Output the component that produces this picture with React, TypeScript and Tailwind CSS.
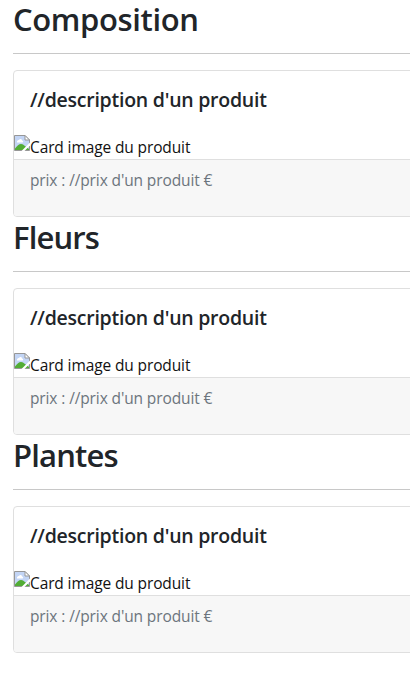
const sections = [
  { title: "Composition", tracking: "tracking-[-0.36px]" },
  { title: "Fleurs", tracking: "tracking-[-0.85px]" },
  { title: "Plantes", tracking: "tracking-[-0.85px]" },
];

function BrokenImage() {
  return (
    <svg width="16" height="16" viewBox="0 0 16 16" className="shrink-0">
      <path d="M0.5 0.5H11L15.5 5V15.5H0.5Z" fill="#c3d5f5" />
      <path d="M3 7.5C2.5 5.5 4.5 5 5 5C5.5 3.5 8 3.5 8 5.5C9.5 5.5 9.5 7.5 8.5 7.5Z" fill="#fff" />
      <path d="M1 15V13.5C3 11 5 9 7 9C9 9 10 10.5 11 11L15 14V15Z" fill="#52ad35" />
      <path d="M0.5 15.5V0.5H11L15.5 5V15.5Z" fill="none" stroke="#979797" />
      <path d="M11 0.5V5H15.5Z" fill="#fff" stroke="#979797" />
      <path d="M7.5 16L16 7.5V10.5L10.5 16Z" fill="#fff" />
    </svg>
  );
}

function Section({ title, tracking }: { title: string; tracking: string }) {
  return (
    <section className="h-[218px]">
      <h2 className={`h-[38px] whitespace-nowrap text-[31px] font-semibold leading-9 ${tracking}`}>
        {title}
      </h2>
      <hr className="mt-[14px] mb-4 border-t border-[#c8c8c8]" />
      <div className="h-[147px] rounded border border-[#dfdfdf] bg-white">
        <h5 className="h-16 px-4 pt-[17px] text-[19.5px] font-semibold leading-6 tracking-[-0.25px] whitespace-nowrap">//description d'un produit</h5>
        <div className="flex h-6 text-[15.5px] leading-6 tracking-[-0.12px] text-[#111]">
          <BrokenImage />
          <span>Card image du produit</span>
        </div>
        <div className="h-[57px] rounded-b-[3px] border-t border-[#dfdfdf] bg-[#f7f7f7] px-4 pt-2 text-[15.5px] leading-6 tracking-[-0.12px] text-[#6c757d]">
          prix : //prix d'un produit €
        </div>
      </div>
    </section>
  );
}

export default function App() {
  return (
    <main className="h-[681px] bg-white overflow-x-clip pl-[13px] pt-px font-['Open_Sans','Noto_Sans',sans-serif] text-[#212529]">
      <div className="w-[420px]">
        {sections.map((section) => <Section key={section.title} {...section} />)}
      </div>
    </main>
  );
}
